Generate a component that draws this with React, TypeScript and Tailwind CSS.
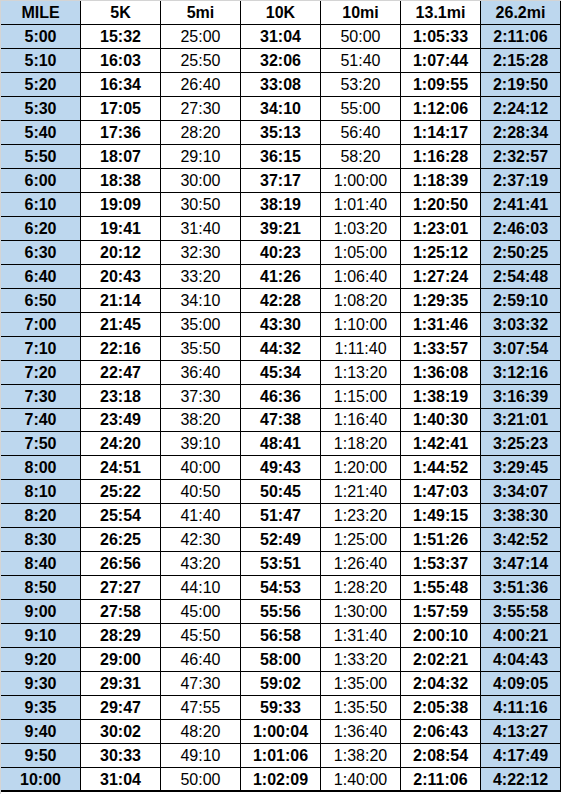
const headers = ["MILE", "5K", "5mi", "10K", "10mi", "13.1mi", "26.2mi"];

const rows = [
  ["5:00", "15:32", "25:00", "31:04", "50:00", "1:05:33", "2:11:06"],
  ["5:10", "16:03", "25:50", "32:06", "51:40", "1:07:44", "2:15:28"],
  ["5:20", "16:34", "26:40", "33:08", "53:20", "1:09:55", "2:19:50"],
  ["5:30", "17:05", "27:30", "34:10", "55:00", "1:12:06", "2:24:12"],
  ["5:40", "17:36", "28:20", "35:13", "56:40", "1:14:17", "2:28:34"],
  ["5:50", "18:07", "29:10", "36:15", "58:20", "1:16:28", "2:32:57"],
  ["6:00", "18:38", "30:00", "37:17", "1:00:00", "1:18:39", "2:37:19"],
  ["6:10", "19:09", "30:50", "38:19", "1:01:40", "1:20:50", "2:41:41"],
  ["6:20", "19:41", "31:40", "39:21", "1:03:20", "1:23:01", "2:46:03"],
  ["6:30", "20:12", "32:30", "40:23", "1:05:00", "1:25:12", "2:50:25"],
  ["6:40", "20:43", "33:20", "41:26", "1:06:40", "1:27:24", "2:54:48"],
  ["6:50", "21:14", "34:10", "42:28", "1:08:20", "1:29:35", "2:59:10"],
  ["7:00", "21:45", "35:00", "43:30", "1:10:00", "1:31:46", "3:03:32"],
  ["7:10", "22:16", "35:50", "44:32", "1:11:40", "1:33:57", "3:07:54"],
  ["7:20", "22:47", "36:40", "45:34", "1:13:20", "1:36:08", "3:12:16"],
  ["7:30", "23:18", "37:30", "46:36", "1:15:00", "1:38:19", "3:16:39"],
  ["7:40", "23:49", "38:20", "47:38", "1:16:40", "1:40:30", "3:21:01"],
  ["7:50", "24:20", "39:10", "48:41", "1:18:20", "1:42:41", "3:25:23"],
  ["8:00", "24:51", "40:00", "49:43", "1:20:00", "1:44:52", "3:29:45"],
  ["8:10", "25:22", "40:50", "50:45", "1:21:40", "1:47:03", "3:34:07"],
  ["8:20", "25:54", "41:40", "51:47", "1:23:20", "1:49:15", "3:38:30"],
  ["8:30", "26:25", "42:30", "52:49", "1:25:00", "1:51:26", "3:42:52"],
  ["8:40", "26:56", "43:20", "53:51", "1:26:40", "1:53:37", "3:47:14"],
  ["8:50", "27:27", "44:10", "54:53", "1:28:20", "1:55:48", "3:51:36"],
  ["9:00", "27:58", "45:00", "55:56", "1:30:00", "1:57:59", "3:55:58"],
  ["9:10", "28:29", "45:50", "56:58", "1:31:40", "2:00:10", "4:00:21"],
  ["9:20", "29:00", "46:40", "58:00", "1:33:20", "2:02:21", "4:04:43"],
  ["9:30", "29:31", "47:30", "59:02", "1:35:00", "2:04:32", "4:09:05"],
  ["9:35", "29:47", "47:55", "59:33", "1:35:50", "2:05:38", "4:11:16"],
  ["9:40", "30:02", "48:20", "1:00:04", "1:36:40", "2:06:43", "4:13:27"],
  ["9:50", "30:33", "49:10", "1:01:06", "1:38:20", "2:08:54", "4:17:49"],
  ["10:00", "31:04", "50:00", "1:02:09", "1:40:00", "2:11:06", "4:22:12"],
];

// columns shaded blue: MILE and marathon
const blueCols = [0, 6];
// columns in regular weight (the even-mile distances)
const lightCols = [2, 4];

const PaceChart = () => {
  return (
    <div className="w-[561px] h-[794px] bg-white border-t border-l border-[#d4d4d4] font-['Liberation_Sans',Arial,sans-serif] text-black text-[16px]">
      <div className="flex flex-col h-[791px]">
        {/* Header */}
        <div className="grid grid-cols-7 w-[560px] h-[24px] shrink-0">
          {headers.map((h, i) => (
            <div
              key={h}
              className={`flex items-center justify-center font-bold border-r border-b border-black leading-none pt-[1px] ${
                blueCols.includes(i) ? "bg-[#bdd7ee]" : "bg-white"
              }`}
            >
              {h}
            </div>
          ))}
        </div>

        {/* Pace rows */}
        {rows.map((row, r) => (
          <div key={r} className="grid grid-cols-7 w-[560px] flex-1 min-h-0">
            {row.map((cell, c) => (
              <div
                key={c}
                className={`flex items-center justify-center border-r border-black leading-none pt-[1px] ${
                  r === rows.length - 1 ? "border-b-2" : "border-b"
                } ${blueCols.includes(c) ? "bg-[#bdd7ee]" : "bg-white"} ${
                  lightCols.includes(c) ? "font-normal" : "font-bold"
                }`}
              >
                {cell}
              </div>
            ))}
          </div>
        ))}
      </div>
    </div>
  );
};

export default function App() {
  return <PaceChart />;
}
